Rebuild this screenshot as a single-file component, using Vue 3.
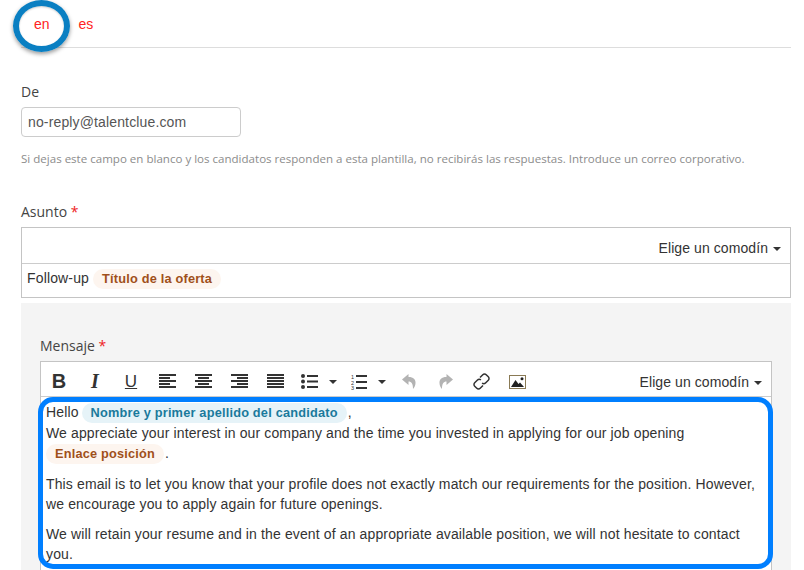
<script setup>
const aligns = {
  left: [[0,17],[0,11],[0,17],[0,11],[0,17]],
  center: [[0,17],[3,11],[0,17],[3,11],[0,17]],
  right: [[0,17],[6,11],[0,17],[6,11],[0,17]],
  justify: [[0,17],[0,17],[0,17],[0,17],[0,17]]
}
</script>

<template>
  <div class="page">
    <nav class="tabs">
      <a class="tab">en</a>
      <a class="tab">es</a>
    </nav>

    <section class="field from">
      <label class="label">De</label>
      <input class="input" value="no-reply@talentclue.com" />
      <p class="help">Si dejas este campo en blanco y los candidatos responden a esta plantilla, no recibirás las respuestas. Introduce un correo corporativo.</p>
    </section>

    <section class="field subject">
      <label class="label">Asunto <span class="req">*</span></label>
      <div class="box">
        <div class="box-top">
          <span class="wild">Elige un comodín <i class="caret"></i></span>
        </div>
        <div class="box-body">Follow-up <span class="chip orange">Título de la oferta</span></div>
      </div>
    </section>

    <section class="panel">
      <label class="label">Mensaje <span class="req">*</span></label>
      <div class="editor">
        <div class="toolbar">
          <span class="btn glyph bold">B</span>
          <span class="btn glyph italic">I</span>
          <span class="btn glyph under">U</span>
          <span v-for="(rows, name) in aligns" :key="name" class="btn">
            <svg width="17" height="15" viewBox="0 0 17 15"><rect v-for="(r, i) in rows" :key="i" :x="r[0]" :y="i * 3" :width="r[1]" height="2" fill="#333"/></svg>
          </span>
          <span class="btn wide-ul">
            <svg width="17" height="15" viewBox="0 0 17 15" fill="#333"><circle cx="2" cy="2" r="2"/><circle cx="2" cy="7.500" r="2"/><circle cx="2" cy="13" r="2"/><rect x="6" y="1" width="11" height="2"/><rect x="6" y="6.500" width="11" height="2"/><rect x="6" y="12" width="11" height="2"/></svg>
            <i class="caret big"></i>
          </span>
          <span class="btn wide-ol">
            <svg width="16" height="16" viewBox="0 0 16 16" fill="#333"><text x="0" y="5" font-size="5.500" font-family="Liberation Sans">1</text><text x="0" y="10.500" font-size="5.500" font-family="Liberation Sans">2</text><text x="0" y="16" font-size="5.500" font-family="Liberation Sans">3</text><rect x="5" y="1" width="11" height="2"/><rect x="5" y="7" width="11" height="2"/><rect x="5" y="13" width="11" height="2"/></svg>
            <i class="caret big"></i>
          </span>
          <span class="btn">
            <svg width="15" height="15" viewBox="0 0 15 15" fill="#b3b3b3"><path d="M6.500 0 0 5.500 6.500 11V7.500c3 0 4.500 2 4.500 7.500C14.500 11 15.500 3 6.500 3z"/></svg>
          </span>
          <span class="btn">
            <svg width="15" height="15" viewBox="0 0 15 15" fill="#b3b3b3"><path d="M8.500 0 15 5.500 8.500 11V7.500c-3 0-4.500 2-4.500 7.500C.5 11-.5 3 8.500 3z"/></svg>
          </span>
          <span class="btn">
            <svg width="17" height="17" viewBox="0 0 17 17" fill="none" stroke="#333" stroke-width="1.500"><path d="M7 4.500 9.800 1.700a2.400 2.400 0 0 1 3.400 0l2.100 2.100a2.400 2.400 0 0 1 0 3.400L12.500 10a2.400 2.400 0 0 1-3.400 0"/><path d="M10 12.500 7.200 15.300a2.400 2.400 0 0 1-3.400 0L1.700 13.200a2.400 2.400 0 0 1 0-3.400L4.500 7a2.400 2.400 0 0 1 3.400 0"/></svg>
          </span>
          <span class="btn">
            <svg width="17" height="14" viewBox="0 0 17 14"><rect x=".5" y=".5" width="16" height="13" fill="#fff" stroke="#8a7a55"/><path d="M2 12 6.500 5 9.500 9 11 7.500 15 12z" fill="#222"/><circle cx="13" cy="3.800" r="1.500" fill="#222"/></svg>
          </span>
          <span class="wild tool-wild">Elige un comodín <i class="caret"></i></span>
        </div>
        <div class="content">
          <p>Hello <span class="chip blue">Nombre y primer apellido del candidato</span><span class="after">,</span><br>We appreciate your interest in our company and the time you invested in applying for our job opening<br><span class="chip orange">Enlace posición</span><span class="after">.</span></p>
          <p>This email is to let you know that your profile does not exactly match our requirements for the position. However, we encourage you to apply again for future openings.</p>
          <p>We will retain your resume and in the event of an appropriate available position, we will not hesitate to contact you.</p>
        </div>
      </div>
    </section>

    <div class="ring"></div>
    <div class="highlight"></div>
  </div>
</template>

<style scoped>
.page {
  position: relative;
  width: 804px;
  height: 570px;
  overflow: hidden;
  padding: 0 13px 0 21px;
  box-sizing: border-box;
  font-family: "Open Sans", sans-serif;
  color: #333;
  background: #fff;
}
.tabs {
  display: flex;
  height: 47px;
  border-bottom: 1px solid #ddd;
  box-sizing: content-box;
}
.tab {
  color: #f22;
  font-size: 14px;
  line-height: 20px;
  padding-top: 14px;
  font-family: "Liberation Sans", sans-serif;
}
.tab:first-child { margin: 0 29px 0 13px; }
.field { display: block; }
.label {
  display: block;
  font-size: 14px;
  line-height: 20px;
  color: #444;
}
.req { color: #e22; }
.from { padding-top: 34px; }
.input {
  display: block;
  width: 220px;
  height: 30px;
  margin-top: 5px;
  box-sizing: border-box;
  border: 1px solid #ccc;
  border-radius: 4px;
  padding: 0 6px;
  font: 14px "Liberation Sans", sans-serif;
  letter-spacing: .14px;
  color: #555;
  outline: none;
}
.help {
  margin: 14px 0 0;
  font-size: 11.560px;
  line-height: 16px;
  color: #8c8c8c;
  white-space: nowrap;
}
.subject { padding-top: 35px; }
.box {
  margin-top: 5px;
  border: 1px solid #c4c4c4;
  height: 71px;
  box-sizing: border-box;
}
.box-top {
  height: 36px;
  border-bottom: 1px solid #ccc;
  box-sizing: border-box;
  display: flex;
  justify-content: flex-end;
  align-items: center;
  padding: 4px 9px 0 0;
}
.wild {
  font: 14px/20px "Liberation Sans", sans-serif;
  letter-spacing: .08px;
  color: #333;
  white-space: nowrap;
}
.caret {
  display: inline-block;
  vertical-align: 2px;
  width: 0;
  height: 0;
  margin-left: 1px;
  border-top: 4px solid #333;
  border-left: 4px solid transparent;
  border-right: 4px solid transparent;
}
.box-body {
  padding: 4px 5px;
  font: 14px/20px "Liberation Sans", sans-serif;
  letter-spacing: .145px;
}
.chip {
  display: inline-block;
  padding: 0 9px;
  height: 20px;
  line-height: 20px;
  border-radius: 10px;
  font-weight: 700;
  font-size: 12.750px;
  letter-spacing: .2px;
}
.chip.orange { background: #fdf5ef; color: #a0501a; }
.chip.blue { background: #e6f3f8; color: #1a7a9c; margin-left: -1px; }
.after { margin-left: 1px; }
.panel {
  margin-top: 5px;
  height: 280px;
  background: #f4f4f4;
  padding: 33px 19px 0;
  box-sizing: border-box;
}
.editor {
  margin-top: 5px;
  background: #fff;
  border: 1px solid #c4c4c4;
  height: 300px;
  box-sizing: border-box;
}
.toolbar {
  display: flex;
  align-items: center;
  height: 35px;
  border-bottom: 1px solid #ccc;
  padding-top: 5px;
  box-sizing: border-box;
}
.btn {
  flex: none;
  width: 36px;
  height: 20px;
  display: flex;
  align-items: center;
  justify-content: center;
}
.wide-ul { width: 50px; justify-content: flex-start; padding-left: 8px; box-sizing: border-box; }
.wide-ol { width: 48px; justify-content: flex-start; padding-left: 8px; box-sizing: border-box; }
.wide-ul .caret, .wide-ol .caret { margin-left: 11px; vertical-align: 0; }
.glyph { font-family: "Liberation Sans", sans-serif; font-size: 20px; color: #333; }
.bold { font-weight: 700; }
.italic { font-style: italic; font-weight: 700; font-family: "Liberation Serif", serif; }
.under { text-decoration: underline; font-size: 17px; }
.tool-wild { margin-left: auto; padding-right: 9px; }
.content {
  padding: 5px 5px 0;
  font: 14px/20px "Liberation Sans", sans-serif;
  letter-spacing: .13px;
  color: #333;
}
.content p { margin: 0 0 10px; }
.ring {
  position: absolute;
  left: 13px;
  top: 0;
  width: 57px;
  height: 52px;
  box-sizing: border-box;
  border: 6px solid #0a7fc2;
  border-radius: 50%;
  box-shadow: 0 2px 4px rgba(0, 0, 0, .4), inset 0 1px 2px rgba(0, 0, 0, .2);
}
.highlight {
  position: absolute;
  left: 38px;
  top: 397px;
  width: 735px;
  height: 172px;
  box-sizing: border-box;
  border: 5px solid #007fff;
  border-radius: 15px;
}
</style>
